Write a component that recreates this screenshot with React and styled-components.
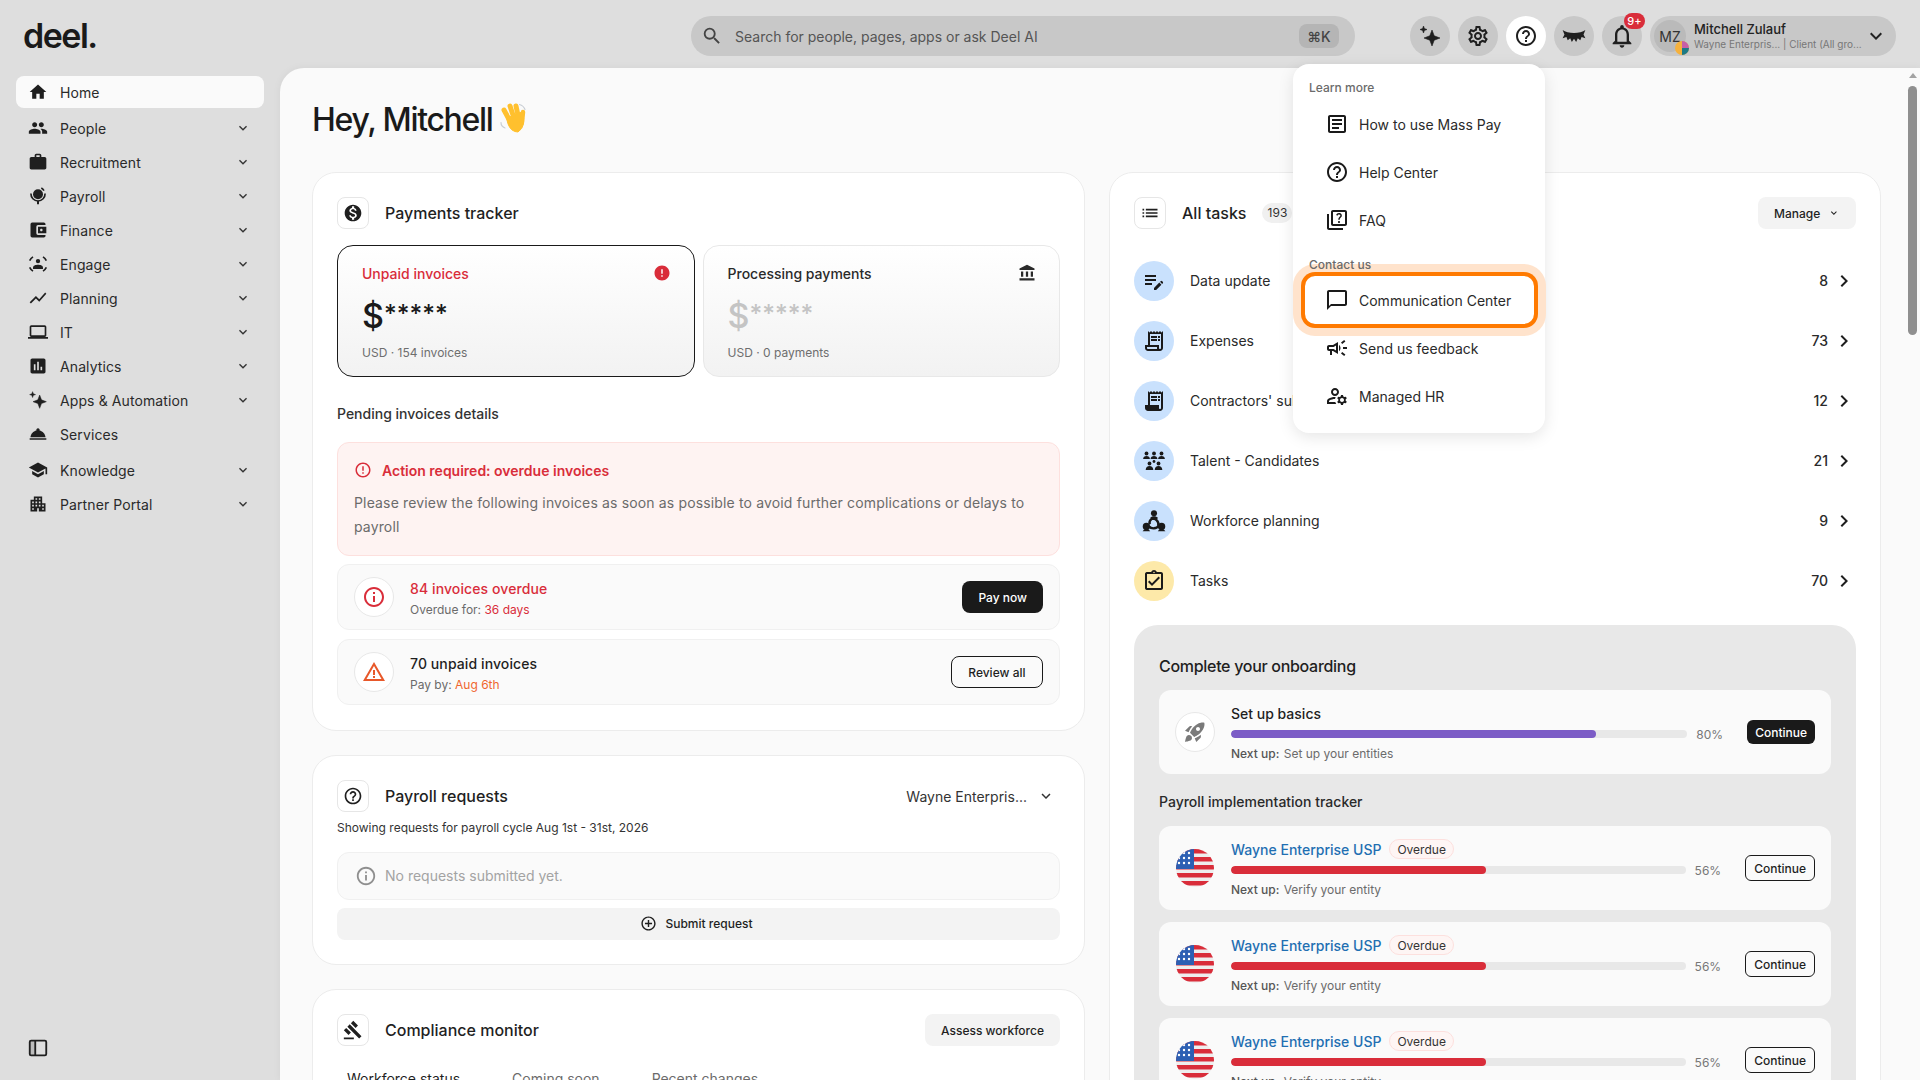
import React from 'react'
import styled, { createGlobalStyle } from 'styled-components'
import {
  MdHome, MdPeople, MdWork, MdShowChart, MdOutlineLaptop, MdAssessment, MdRoomService, MdSchool, MdApartment,
  MdKeyboardArrowDown, MdChevronRight, MdSearch, MdOutlineSettings, MdHelpOutline, MdOutlineNotifications,
  MdOutlineArticle, MdOutlineQuiz, MdChatBubbleOutline, MdOutlineCampaign, MdOutlineManageAccounts,
  MdEditNote, MdReceiptLong, MdOutlineReceiptLong, MdOutlineAssignmentTurnedIn, MdRocketLaunch, MdGavel,
  MdMonetizationOn, MdError, MdAccountBalance, MdErrorOutline, MdInfoOutline, MdWarningAmber,
  MdAddCircleOutline, MdList, MdAccountBalanceWallet,
} from 'react-icons/md'

const GlobalStyle = createGlobalStyle`
  html, body { margin: 0; padding: 0; height: 100%; overflow: hidden; }
  body { font-family: Inter, "Liberation Sans", sans-serif; color: #1f1f1f; background: #dedede; }
  * { box-sizing: border-box; }
`

const Page = styled.div`
  position: relative;
  width: 1920px;
  height: 1080px;
  overflow: hidden;
  background: #dedede;
  display: flex;
  flex-direction: column;
`

/* top bar */
const TopBar = styled.header`
  height: 68px;
  flex: none;
  display: flex;
  align-items: flex-start;
  padding: 16px 24px 0;
`
const LogoBlock = styled.div`
  width: 667px;
  flex: none;
  font-size: 34px;
  font-weight: 600;
  line-height: 40px;
  letter-spacing: -1.5px;
  margin-left: -1px;
  margin-right: 1px;
  color: #1a1a1a;
`
const Search = styled.div`
  width: 664px;
  height: 40px;
  flex: none;
  border-radius: 20px;
  background: #c8c8c8;
  display: flex;
  align-items: center;
  padding: 0 16px 0 10px;
  font-size: 14px;
  color: #555;
  margin-right: 55px;
  svg { font-size: 22px; margin-right: 12px; color: #444; }
`
const SearchText = styled.span`
  flex: 1;
`
const Kbd = styled.span`
  width: 40px;
  height: 24px;
  border-radius: 8px;
  background: #b5b5b5;
  font-size: 14px;
  font-weight: 500;
  display: flex;
  align-items: center;
  justify-content: center;
  color: #444;
`
const RoundButton = styled.div`
  position: relative;
  width: 40px;
  height: 40px;
  flex: none;
  border-radius: 50%;
  margin-right: 8px;
  background: ${({ $active }) => ($active ? '#fff' : '#c8c8c8')};
  display: flex;
  align-items: center;
  justify-content: center;
  font-size: 24px;
  color: #1f1f1f;
`
const CountBadge = styled.span`
  position: absolute;
  top: -3px;
  left: 22px;
  width: 21px;
  height: 16px;
  border-radius: 8px;
  background: #d92d3a;
  color: #fff;
  font-size: 11px;
  font-weight: 500;
  line-height: 16px;
  text-align: center;
`
const Profile = styled.div`
  width: 246px;
  height: 40px;
  flex: none;
  border-radius: 20px;
  background: #c8c8c8;
  display: flex;
  align-items: center;
  padding: 0 8px 0 4px;
`
const Avatar = styled.div`
  position: relative;
  width: 32px;
  height: 32px;
  flex: none;
  border-radius: 50%;
  background: #bababa;
  font-size: 14px;
  color: #333;
  display: flex;
  align-items: center;
  justify-content: center;
  margin-right: 8px;
`
const OrgDot = styled.svg`
  position: absolute;
  right: -3px;
  bottom: -3px;
  width: 14px;
  height: 14px;
`
const ProfileText = styled.div`
  flex: 1;
  min-width: 0;
  display: flex;
  flex-direction: column;
`
const ProfileName = styled.span`
  font-size: 13px;
  font-weight: 500;
  line-height: 16px;
  color: #222;
`
const ProfileSub = styled.span`
  font-size: 10px;
  line-height: 14px;
  color: #777;
  white-space: nowrap;
`
const ProfileChevron = styled(MdKeyboardArrowDown)`
  font-size: 24px;
  flex: none;
  color: #222;
`

/* sidebar */
const Body = styled.div`
  flex: 1;
  min-height: 0;
  display: flex;
`
const Sidebar = styled.nav`
  width: 280px;
  flex: none;
  padding: 8px 16px 21px;
  display: flex;
  flex-direction: column;
`
const NavRow = styled.div`
  height: ${({ $active }) => ($active ? '32px' : '34px')};
  margin-bottom: ${({ $active }) => ($active ? '3px' : '0')};
  margin-top: ${({ $gapAbove }) => ($gapAbove ? '2px' : '0')};
  width: 248px;
  flex: none;
  border-radius: 8px;
  background: ${({ $active }) => ($active ? '#fafafa' : 'transparent')};
  display: flex;
  align-items: center;
  padding: 0 5px 0 12px;
  font-size: 14px;
  letter-spacing: 0.1px;
  color: #2a2a2a;
`
const NavIcon = styled.span`
  width: 20px;
  height: 20px;
  flex: none;
  margin-right: 12px;
  display: flex;
  align-items: center;
  justify-content: center;
  font-size: 20px;
  color: #1f1f1f;
`
const NavLabel = styled.span`
  flex: 1;
`
const NavChevron = styled(MdKeyboardArrowDown)`
  font-size: 16px;
  flex: none;
  margin-right: 8px;
  color: #333;
`
const SideToggle = styled.svg`
  width: 22px;
  height: 22px;
  margin: auto 0 0 11px;
`

/* main panel */
const Panel = styled.main`
  flex: 1;
  min-width: 0;
  display: flex;
  background: #fafafa;
  border-top-left-radius: 24px;
  overflow: hidden;
  box-shadow: 0 0 8px rgba(0, 0, 0, 0.05);
`
const Content = styled.div`
  flex: 1;
  min-width: 0;
  padding: 0 24px 0 32px;
`
const Heading = styled.h1`
  margin: 0;
  height: 104px;
  display: flex;
  align-items: flex-start;
  padding-top: 32px;
  font-size: 32px;
  font-weight: 500;
  line-height: 40px;
  letter-spacing: -1.3px;
  color: #1a1a1a;
  svg { margin: -2px 0 0 -2px; }
`
const Columns = styled.div`
  display: grid;
  grid-template-columns: 773px 772px;
  gap: 24px;
  align-items: start;
`
const Column = styled.div`
  display: flex;
  flex-direction: column;
  gap: 24px;
  min-width: 0;
`
const Card = styled.section`
  background: #fff;
  border: 1px solid #ececec;
  border-radius: 24px;
  padding: 24px 24px ${({ $bottom }) => $bottom || 24}px;
`
const CardHeader = styled.div`
  height: 32px;
  display: flex;
  align-items: center;
`
const IconBox = styled.span`
  width: 32px;
  height: 32px;
  flex: none;
  border: 1px solid #e6e6e6;
  border-radius: 8px;
  display: flex;
  align-items: center;
  justify-content: center;
  font-size: 20px;
  margin-right: 16px;
  color: #1f1f1f;
`
const CardTitle = styled.h2`
  margin: 0;
  font-size: 16px;
  font-weight: 500;
  line-height: 24px;
  color: #1f1f1f;
`
const Spacer = styled.span`
  flex: 1;
`

/* payments tracker */
const Tiles = styled.div`
  display: grid;
  grid-template-columns: 1fr 1fr;
  gap: 8px;
  margin-top: 16px;
`
const Tile = styled.div`
  height: 132px;
  padding: 17px 23px 0 24px;
  border-radius: 16px;
  border: 1px solid ${({ $selected }) => ($selected ? '#1a1a1a' : '#e8e8e8')};
  background: linear-gradient(180deg, #ffffff 0%, #f2f2f2 100%);
`
const TileTop = styled.div`
  display: flex;
  justify-content: space-between;
  align-items: center;
  height: 20px;
  font-size: 14px;
  font-weight: 500;
  color: ${({ $color }) => $color};
  svg { font-size: 18px; }
`
const Amount = styled.div`
  margin-top: 12px;
  height: 36px;
  font-size: 34px;
  font-weight: 500;
  line-height: 36px;
  color: ${({ $muted }) => ($muted ? '#c4c4c4' : '#1a1a1a')};
`
const Stars = styled.span`
  font-size: 24.5px;
  vertical-align: 6px;
`
const TileSub = styled.div`
  margin-top: 14px;
  font-size: 12px;
  line-height: 16px;
  color: #6e6e6e;
`
const SubTitle = styled.div`
  margin-top: 27px;
  font-size: 14px;
  font-weight: 500;
  line-height: 20px;
  color: #333;
`
const Alert = styled.div`
  margin-top: 18px;
  height: 114px;
  padding: 15px 16px 0;
  border: 1px solid #fde0de;
  border-radius: 12px;
  background: #fef3f2;
`
const AlertTitle = styled.div`
  display: flex;
  align-items: center;
  height: 24px;
  font-size: 14px;
  font-weight: 600;
  color: #d92d3a;
  svg { font-size: 18px; margin-right: 10px; }
`
const AlertBody = styled.p`
  margin: 9px 0 0;
  font-size: 14px;
  line-height: 24px;
  letter-spacing: 0.15px;
  color: #6b6b6b;
`
const InvoiceRow = styled.div`
  margin-top: ${({ $top }) => $top}px;
  height: 66px;
  padding: 0 16px;
  display: flex;
  align-items: center;
  border: 1px solid #f0f0f0;
  border-radius: 12px;
  background: #fafafa;
`
const RoundIcon = styled.span`
  width: 40px;
  height: 40px;
  flex: none;
  border-radius: 50%;
  border: ${({ $plain }) => ($plain ? 'none' : '1px solid #e8e8e8')};
  background: ${({ $plain }) => ($plain ? 'transparent' : '#fff')};
  display: flex;
  align-items: center;
  justify-content: center;
  font-size: 24px;
  color: ${({ $color }) => $color || '#1f1f1f'};
  margin-right: 16px;
`
const RowText = styled.div`
  flex: 1;
  min-width: 0;
  padding-top: 3px;
`
const RowTitle = styled.div`
  font-size: 14px;
  font-weight: 500;
  line-height: 20px;
  letter-spacing: 0.1px;
  color: ${({ $color }) => $color || '#1f1f1f'};
`
const RowSub = styled.div`
  margin-top: 3px;
  font-size: 12px;
  line-height: 16px;
  color: #6b6b6b;
`
const Accent = styled.span`
  color: ${({ $color }) => $color};
`
const Button = styled.button`
  height: ${({ $h }) => $h || 32}px;
  flex: none;
  padding: 0 ${({ $px }) => $px || 16}px;
  border-radius: ${({ $r }) => $r || 8}px;
  font-family: inherit;
  font-size: 12px;
  font-weight: 500;
  display: flex;
  align-items: center;
  gap: 8px;
  color: ${({ $variant }) => ($variant === 'dark' ? '#fff' : '#1f1f1f')};
  background: ${({ $variant }) => ($variant === 'dark' ? '#1a1a1a' : $variant === 'soft' ? '#f3f3f3' : 'transparent')};
  border: ${({ $variant }) => ($variant === 'outline' ? '1px solid #1a1a1a' : 'none')};
`

/* payroll requests */
const EntityPicker = styled.div`
  display: flex;
  align-items: center;
  font-size: 14px;
  color: #333;
  svg { font-size: 18px; margin: 0 5px 0 10px; }
`
const Caption = styled.div`
  margin-top: 8px;
  font-size: 12px;
  line-height: 16px;
  color: #333;
`
const EmptyBox = styled.div`
  margin-top: 16px;
  height: 48px;
  padding: 0 17px 1px;
  display: flex;
  align-items: center;
  border: 1px solid #f0f0f0;
  border-radius: 12px;
  background: #fafafa;
  font-size: 14px;
  color: #a3a3a3;
  svg { font-size: 22px; margin-right: 8px; color: #8f8f8f; }
`
const WideButton = styled(Button)`
  width: 100%;
  justify-content: center;
  margin-top: 8px;
  padding-bottom: 1px;
  padding-right: 20px;
  svg { font-size: 17px; }
`
const Tabs = styled.div`
  display: flex;
  gap: 52px;
  margin-top: 23px;
  padding-left: 10px;
  font-size: 14px;
  line-height: 20px;
`
const Tab = styled.span`
  color: ${({ $active }) => ($active ? '#1f1f1f' : '#6b6b6b')};
`

/* all tasks */
const CountPill = styled.span`
  margin-left: 16px;
  width: 30px;
  height: 20px;
  border-radius: 10px;
  background: #f0f0f0;
  font-size: 12px;
  line-height: 20px;
  text-align: center;
  color: #333;
`
const ManageButton = styled(Button)`
  width: 98px;
  padding: 0 16px;
  justify-content: space-between;
  svg { font-size: 16px; }
`
const TaskList = styled.div`
  margin-top: 22px;
`
const TaskRow = styled.div`
  height: 60px;
  display: flex;
  align-items: center;
  font-size: 14px;
  color: #2a2a2a;
`
const TaskIcon = styled.span`
  width: 40px;
  height: 40px;
  flex: none;
  border-radius: 50%;
  background: ${({ $bg }) => $bg};
  display: flex;
  align-items: center;
  justify-content: center;
  font-size: 24px;
  color: #1a1a1a;
  margin-right: 16px;
`
const TaskLabel = styled.span`
  padding-bottom: 2px;
`
const TaskCount = styled.span`
  margin-left: auto;
  font-weight: 500;
  padding-bottom: 1px;
`
const TaskChevron = styled(MdChevronRight)`
  font-size: 24px;
  flex: none;
  margin-left: 4px;
  color: #1f1f1f;
`
const Onboarding = styled.div`
  margin-top: 14px;
  padding: 31px 25px 24px;
  border-radius: 24px;
  background: #e8e8e8;
`
const OnboardingTitle = styled.h3`
  margin: 0;
  font-size: 16px;
  font-weight: 500;
  line-height: 20px;
  letter-spacing: -0.3px;
  color: #1f1f1f;
`
const TrackerTitle = styled.div`
  margin-top: 18px;
  font-size: 14px;
  font-weight: 500;
  line-height: 20px;
  color: #2a2a2a;
`
const StepCard = styled.div`
  margin-top: ${({ $top }) => $top}px;
  height: 84px;
  padding: 0 16px;
  display: flex;
  align-items: center;
  border-radius: 12px;
  background: #fafafa;
`
const StepBody = styled.div`
  flex: 1;
  min-width: 0;
  align-self: flex-start;
  padding-top: 13px;
`
const StepHead = styled.div`
  display: flex;
  align-items: center;
  height: 20px;
  font-size: 14px;
  font-weight: 500;
  color: ${({ $color }) => $color || '#1f1f1f'};
`
const OverdueBadge = styled.span`
  margin-left: 8px;
  height: 20px;
  padding: 0 7px;
  border: 1px solid #fde0de;
  border-radius: 10px;
  background: #fef5f4;
  font-size: 12px;
  font-weight: 400;
  line-height: 19px;
  color: #333;
`
const ProgressRow = styled.div`
  margin: 7px 0 0;
  display: flex;
  align-items: center;
  height: 8px;
  gap: 9px;
`
const Track = styled.div`
  flex: 1;
  height: 8px;
  border-radius: 4px;
  background: #e8e8e8;
  overflow: hidden;
`
const Fill = styled.div`
  height: 100%;
  border-radius: 4px;
  background: ${({ $color }) => $color};
`
const Percent = styled.span`
  font-size: 12px;
  color: #777;
`
const StepNext = styled.div`
  margin-top: 8px;
  font-size: 12px;
  line-height: 16px;
  color: #6b6b6b;
  b { font-weight: 500; color: #555; margin-right: 1px; }
`
const StepAction = styled.div`
  margin-left: 24px;
  flex: none;
`

/* help menu */
const HelpMenu = styled.div`
  position: absolute;
  top: 64px;
  left: 1293px;
  width: 252px;
  height: 369px;
  padding: 12px 11px 0 12px;
  border-radius: 16px;
  background: #fff;
  box-shadow: 0 4px 16px rgba(0, 0, 0, 0.1);
  z-index: 5;
`
const MenuLabel = styled.div`
  position: relative;
  z-index: 1;
  height: ${({ $top }) => ($top ? 23 : 24)}px;
  margin-top: ${({ $top }) => $top || 0}px;
  padding-left: 4px;
  font-size: 12px;
  font-weight: 500;
  line-height: 24px;
  color: #6b6b6b;
`
const MenuItem = styled.div`
  height: 48px;
  display: flex;
  align-items: center;
  padding-left: 20px;
  font-size: 14px;
  color: #2a2a2a;
  border-radius: 10px;
  svg { font-size: 24px; margin-right: 10px; color: #1a1a1a; }
  ${({ $highlight }) => $highlight && 'box-shadow: 0 0 0 4px #ff7a00, 0 0 0 12px #ffe3cc;'}
`

/* scrollbar */
const ScrollTrack = styled.div`
  width: 15px;
  flex: none;
  display: flex;
  flex-direction: column;
  align-items: center;
  padding-top: 5px;
`
const ScrollArrow = styled.div`
  width: 0;
  height: 0;
  border-left: 4px solid transparent;
  border-right: 4px solid transparent;
  border-bottom: 5px solid #a3a3a3;
`
const ScrollThumb = styled.div`
  margin-top: 8px;
  width: 9px;
  height: 249px;
  border-radius: 5px;
  background: #8f8f8f;
`

const Sparkle = ({ size = 24 }) => (
  <svg width={size} height={size} viewBox="0 0 24 24" fill="currentColor" stroke="currentColor" strokeWidth="0.6" strokeLinejoin="round">
    <path d="M14 6l2.200 5.800L22 14l-5.800 2.200L14 22l-2.200-5.800L6 14l5.800-2.200z" />
    <path d="M5.500 2l.9 2.600L9 5.500l-2.600.9L5.500 9l-.9-2.600L2 5.500l2.600-.9z" />
  </svg>
)

const GlobeStand = () => (
  <svg width="20" height="20" viewBox="0 0 24 24" fill="none" stroke="currentColor">
    <circle cx="12" cy="10" r="6" fill="currentColor" stroke="none" />
    <path d="M3.500 9a8.700 8.700 0 0 0 8.500 9 8.700 8.700 0 0 0 8.500-9" strokeWidth="2" />
    <path d="M16 2.500a8.600 8.600 0 0 1 3.200 3" strokeWidth="2" />
    <path d="M12 18v4" strokeWidth="2.400" />
  </svg>
)

const FaceScan = () => (
  <svg width="20" height="20" viewBox="0 0 24 24" fill="none" stroke="currentColor" strokeWidth="2">
    <path d="M2 8a11 11 0 0 1 4-4.500M18 3.500A11 11 0 0 1 22 8M2 16a11 11 0 0 0 4 4.500M18 20.500A11 11 0 0 0 22 16" />
    <circle cx="12" cy="8.500" r="2.600" fill="currentColor" stroke="none" />
    <path d="M6 16.500c0-2.500 3-3.500 6-3.500s6 1 6 3.500V18H6z" fill="currentColor" stroke="none" />
  </svg>
)

const Lashes = () => (
  <svg width="26" height="26" viewBox="0 0 24 24" fill="currentColor">
    <path d="M1.500 6.500C6 10 18 10 22.500 6.500L20.800 10.500 22.500 14 19 13 17.800 16 15.500 14 14 17.500 12 14.500 10 17.500 8.500 14 6.200 16 5 13 1.500 14 3.200 10.500z" />
  </svg>
)

const PanelToggle = () => (
  <SideToggle viewBox="0 0 24 24" fill="none" stroke="#1f1f1f" strokeWidth="2">
    <rect x="3" y="4" width="18" height="16" rx="1.500" />
    <path d="M9 4v16" />
    <rect x="3" y="4" width="6" height="16" fill="#1f1f1f" fillOpacity="0.18" stroke="none" />
  </SideToggle>
)

const WavingHand = () => (
  <svg width="40" height="36" viewBox="0 0 40 36" fill="none" stroke="#ffc02e" strokeLinecap="round">
    <path d="M16 20L31 14Q36 28 27 34Q20 34 17 26Z" fill="#ffc02e" stroke="#ffc02e" strokeWidth="1" strokeLinejoin="round" />
    <path d="M13 12L20 25" strokeWidth="5" />
    <path d="M19 8L24 23" strokeWidth="5" />
    <path d="M25 8L28 22" strokeWidth="5" />
    <path d="M32 14L31 24" strokeWidth="4.500" />
    <path d="M28.500 6.500q4 1 5.500 5M10 24.500q0 4 4 5.500" stroke="#c9ced4" strokeWidth="1.200" />
  </svg>
)

const TalentGrid = () => (
  <svg width="24" height="24" viewBox="0 0 24 24" fill="currentColor">
    {[4.5, 12, 19.5].map((x) => (
      <g key={x}>
        <circle cx={x} cy="4.500" r="1.900" />
        <path d={`M${x - 3.4} 10c0-2 1.500-3 3.400-3s3.400 1 3.400 3z`} />
      </g>
    ))}
    <circle cx="12" cy="12.500" r="1.400" />
    {[7.5, 16.5].map((x) => (
      <g key={x}>
        <circle cx={x} cy="14.500" r="1.900" />
        <path d={`M${x - 3.8} 21c0-2.500 1.700-4 3.800-4s3.800 1.500 3.800 4z`} />
      </g>
    ))}
  </svg>
)

const WorkforceKnot = () => (
  <svg width="26" height="26" viewBox="0 0 24 24" fill="currentColor">
    <circle cx="12" cy="4.800" r="2.800" />
    <path d="M8.500 9.500c.5-1.200 2-1.800 3.500-1.800s3 .6 3.500 1.800z" />
    <circle cx="5" cy="17" r="3.400" />
    <circle cx="19" cy="17" r="3.400" />
    <path d="M1.500 21.500c.5-1.500 2-2 3.500-2s3 .5 3.500 2zM15.500 21.500c.5-1.500 2-2 3.500-2s3 .5 3.500 2z" />
    <path d="M8 15c-1-4 3-7 7-5M9 10c4-1 8 2 7 7M16.500 16c-2 3.500-7 3.500-9 1" fill="none" stroke="currentColor" strokeWidth="2.200" />
  </svg>
)

const UsFlag = () => (
  <svg width="40" height="40" viewBox="0 0 40 40">
    <defs>
      <clipPath id="flagClip">
        <circle cx="20" cy="20" r="19" />
      </clipPath>
    </defs>
    <g clipPath="url(#flagClip)">
      <rect width="40" height="40" fill="#eeeeee" />
      {[1, 9, 17, 25, 33].map((y) => (
        <rect key={y} y={y} width="40" height="4.500" fill="#d92d3a" />
      ))}
      <rect width="19" height="21" fill="#2c5fb3" />
      {[5, 10, 15].map((y) =>
        [4, 9, 14].map((x) => <circle key={`${x}-${y}`} cx={x} cy={y} r="1.200" fill="#fff" />),
      )}
    </g>
  </svg>
)

const navItems = [
  { label: 'People', icon: <MdPeople />, sub: true },
  { label: 'Recruitment', icon: <MdWork />, sub: true },
  { label: 'Payroll', icon: <GlobeStand />, sub: true },
  { label: 'Finance', icon: <MdAccountBalanceWallet />, sub: true },
  { label: 'Engage', icon: <FaceScan />, sub: true },
  { label: 'Planning', icon: <MdShowChart />, sub: true },
  { label: 'IT', icon: <MdOutlineLaptop />, sub: true },
  { label: 'Analytics', icon: <MdAssessment />, sub: true },
  { label: 'Apps & Automation', icon: <Sparkle size={20} />, sub: true },
  { label: 'Services', icon: <MdRoomService /> },
  { label: 'Knowledge', icon: <MdSchool />, sub: true, gapAbove: true },
  { label: 'Partner Portal', icon: <MdApartment />, sub: true },
]

const tasks = [
  { label: 'Data update', count: 8, icon: <MdEditNote />, bg: '#c9e1fd' },
  { label: 'Expenses', count: 73, icon: <MdOutlineReceiptLong />, bg: '#c9e1fd' },
  { label: "Contractors' submissions", count: 12, icon: <MdReceiptLong />, bg: '#c9e1fd' },
  { label: 'Talent - Candidates', count: 21, icon: <TalentGrid />, bg: '#c9e1fd' },
  { label: 'Workforce planning', count: 9, icon: <WorkforceKnot />, bg: '#c9e1fd' },
  { label: 'Tasks', count: 70, icon: <MdOutlineAssignmentTurnedIn />, bg: '#fde9a9' },
]

const EntityStep = ({ top }) => (
  <StepCard $top={top}>
    <RoundIcon $plain>
      <UsFlag />
    </RoundIcon>
    <StepBody>
      <StepHead $color="#1f6fb2">
        Wayne Enterprise USP
        <OverdueBadge>Overdue</OverdueBadge>
      </StepHead>
      <ProgressRow>
        <Track>
          <Fill $color="#d92d3a" style={{ width: '56%' }} />
        </Track>
        <Percent>56%</Percent>
      </ProgressRow>
      <StepNext>
        <b>Next up:</b> Verify your entity
      </StepNext>
    </StepBody>
    <StepAction>
      <Button $variant="outline" $h={26} $px={8} $r={6}>Continue</Button>
    </StepAction>
  </StepCard>
)

export default function App() {
  return (
    <Page>
      <GlobalStyle />
      <TopBar>
        <LogoBlock>deel.</LogoBlock>
        <Search>
          <MdSearch />
          <SearchText>Search for people, pages, apps or ask Deel AI</SearchText>
          <Kbd>⌘K</Kbd>
        </Search>
        <RoundButton><Sparkle /></RoundButton>
        <RoundButton><MdOutlineSettings /></RoundButton>
        <RoundButton $active><MdHelpOutline /></RoundButton>
        <RoundButton><Lashes /></RoundButton>
        <RoundButton>
          <MdOutlineNotifications style={{ fontSize: 28 }} />
          <CountBadge>9+</CountBadge>
        </RoundButton>
        <Profile>
          <Avatar>
            MZ
            <OrgDot viewBox="0 0 14 14">
              <circle cx="7" cy="7" r="7" fill="#f5b13d" />
              <path d="M7 7V14A7 7 0 0 0 14 7z" fill="#1d7a86" />
              <path d="M7 7V0A7 7 0 0 1 14 7z" fill="#c75fa8" />
            </OrgDot>
          </Avatar>
          <ProfileText>
            <ProfileName>Mitchell Zulauf</ProfileName>
            <ProfileSub>Wayne Enterpris... | Client (All gro...</ProfileSub>
          </ProfileText>
          <ProfileChevron />
        </Profile>
      </TopBar>
      <Body>
        <Sidebar>
          <NavRow $active>
            <NavIcon><MdHome /></NavIcon>
            <NavLabel>Home</NavLabel>
          </NavRow>
          {navItems.map((item) => (
            <NavRow key={item.label} $gapAbove={item.gapAbove}>
              <NavIcon>{item.icon}</NavIcon>
              <NavLabel>{item.label}</NavLabel>
              {item.sub && <NavChevron />}
            </NavRow>
          ))}
          <PanelToggle />
        </Sidebar>
        <Panel>
          <Content>
            <Heading>Hey, Mitchell <WavingHand /></Heading>
            <Columns>
              <Column>
                <Card $bottom={25}>
                  <CardHeader>
                    <IconBox><MdMonetizationOn /></IconBox>
                    <CardTitle>Payments tracker</CardTitle>
                  </CardHeader>
                  <Tiles>
                    <Tile $selected>
                      <TileTop $color="#d92d3a">Unpaid invoices <MdError /></TileTop>
                      <Amount>$<Stars>*****</Stars></Amount>
                      <TileSub>USD · 154 invoices</TileSub>
                    </Tile>
                    <Tile>
                      <TileTop $color="#2a2a2a">Processing payments <MdAccountBalance /></TileTop>
                      <Amount $muted>$<Stars>*****</Stars></Amount>
                      <TileSub>USD · 0 payments</TileSub>
                    </Tile>
                  </Tiles>
                  <SubTitle>Pending invoices details</SubTitle>
                  <Alert>
                    <AlertTitle><MdErrorOutline />Action required: overdue invoices</AlertTitle>
                    <AlertBody>
                      Please review the following invoices as soon as possible to avoid further complications or delays to payroll
                    </AlertBody>
                  </Alert>
                  <InvoiceRow $top={8}>
                    <RoundIcon $color="#d92d3a"><MdInfoOutline /></RoundIcon>
                    <RowText>
                      <RowTitle $color="#d92d3a">84 invoices overdue</RowTitle>
                      <RowSub>Overdue for: <Accent $color="#d92d3a">36 days</Accent></RowSub>
                    </RowText>
                    <Button $variant="dark">Pay now</Button>
                  </InvoiceRow>
                  <InvoiceRow $top={9}>
                    <RoundIcon $color="#e8582a"><MdWarningAmber /></RoundIcon>
                    <RowText>
                      <RowTitle>70 unpaid invoices</RowTitle>
                      <RowSub>Pay by: <Accent $color="#f0662e">Aug 6th</Accent></RowSub>
                    </RowText>
                    <Button $variant="outline" $px={16.5}>Review all</Button>
                  </InvoiceRow>
                </Card>
                <Card>
                  <CardHeader>
                    <IconBox><MdHelpOutline /></IconBox>
                    <CardTitle>Payroll requests</CardTitle>
                    <Spacer />
                    <EntityPicker>Wayne Enterpris...<MdKeyboardArrowDown /></EntityPicker>
                  </CardHeader>
                  <Caption>Showing requests for payroll cycle Aug 1st - 31st, 2026</Caption>
                  <EmptyBox><MdInfoOutline />No requests submitted yet.</EmptyBox>
                  <WideButton $variant="soft"><MdAddCircleOutline />Submit request</WideButton>
                </Card>
                <Card>
                  <CardHeader>
                    <IconBox><MdGavel /></IconBox>
                    <CardTitle>Compliance monitor</CardTitle>
                    <Spacer />
                    <Button $variant="soft">Assess workforce</Button>
                  </CardHeader>
                  <Tabs>
                    <Tab $active>Workforce status</Tab>
                    <Tab>Coming soon</Tab>
                    <Tab>Recent changes</Tab>
                  </Tabs>
                </Card>
              </Column>
              <Column>
                <Card>
                  <CardHeader>
                    <IconBox><MdList /></IconBox>
                    <CardTitle>All tasks</CardTitle>
                    <CountPill>193</CountPill>
                    <Spacer />
                    <ManageButton $variant="soft">Manage<MdKeyboardArrowDown /></ManageButton>
                  </CardHeader>
                  <TaskList>
                    {tasks.map((task) => (
                      <TaskRow key={task.label}>
                        <TaskIcon $bg={task.bg}>{task.icon}</TaskIcon>
                        <TaskLabel>{task.label}</TaskLabel>
                        <TaskCount>{task.count}</TaskCount>
                        <TaskChevron />
                      </TaskRow>
                    ))}
                  </TaskList>
                  <Onboarding>
                    <OnboardingTitle>Complete your onboarding</OnboardingTitle>
                    <StepCard $top={14}>
                      <RoundIcon $color="#7a7a7a"><MdRocketLaunch /></RoundIcon>
                      <StepBody>
                        <StepHead>Set up basics</StepHead>
                        <ProgressRow>
                          <Track>
                            <Fill $color="#7c5cc6" style={{ width: '80%' }} />
                          </Track>
                          <Percent>80%</Percent>
                        </ProgressRow>
                        <StepNext><b>Next up:</b> Set up your entities</StepNext>
                      </StepBody>
                      <StepAction>
                        <Button $variant="dark" $h={24} $px={8} $r={6}>Continue</Button>
                      </StepAction>
                    </StepCard>
                    <TrackerTitle>Payroll implementation tracker</TrackerTitle>
                    <EntityStep top={14} />
                    <EntityStep top={12} />
                    <EntityStep top={12} />
                  </Onboarding>
                </Card>
              </Column>
            </Columns>
          </Content>
          <ScrollTrack>
            <ScrollArrow />
            <ScrollThumb />
          </ScrollTrack>
        </Panel>
      </Body>
      <HelpMenu>
        <MenuLabel>Learn more</MenuLabel>
        <MenuItem><MdOutlineArticle />How to use Mass Pay</MenuItem>
        <MenuItem><MdHelpOutline />Help Center</MenuItem>
        <MenuItem><MdOutlineQuiz />FAQ</MenuItem>
        <MenuLabel $top={9}>Contact us</MenuLabel>
        <MenuItem $highlight><MdChatBubbleOutline />Communication Center</MenuItem>
        <MenuItem><MdOutlineCampaign />Send us feedback</MenuItem>
        <MenuItem><MdOutlineManageAccounts />Managed HR</MenuItem>
      </HelpMenu>
    </Page>
  )
}
